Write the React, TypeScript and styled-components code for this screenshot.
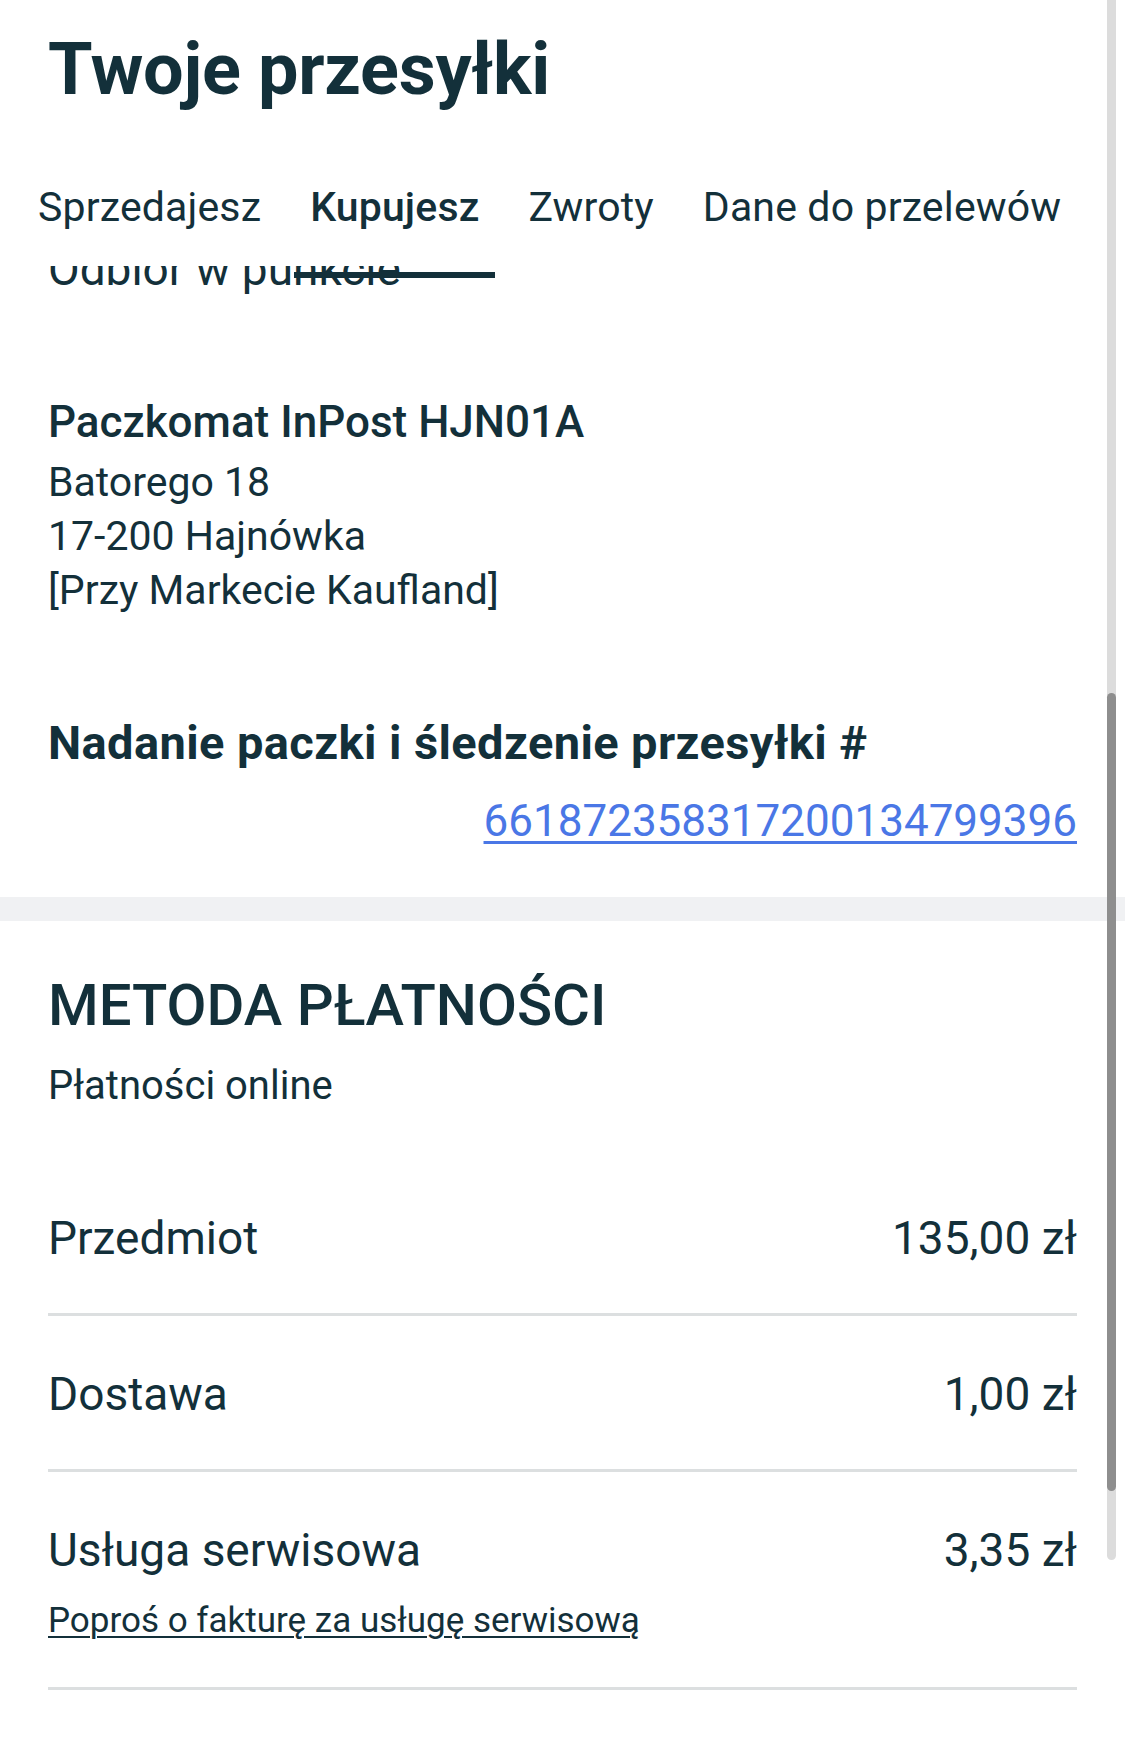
import styled, { createGlobalStyle } from "styled-components";

const ink = "#13303a";
const linkBlue = "#4a77e6";
const divider = "#dcdfe0";

const GlobalStyle = createGlobalStyle`
  html, body {
    margin: 0;
    padding: 0;
    background: #ffffff;
  }
  body {
    font-family: Roboto, "Noto Sans", "Liberation Sans", sans-serif;
    color: ${ink};
  }
  * {
    box-sizing: border-box;
  }
`;

const Page = styled.div`
  position: relative;
  display: flex;
  flex-direction: column;
  width: 100%;
  height: 1738px;
  overflow: hidden;
  background: #ffffff;
`;

const Header = styled.header`
  position: relative;
  z-index: 2;
  flex-shrink: 0;
  background: #ffffff;
  padding-top: 30px;
`;

const Title = styled.h1`
  margin: 0;
  padding: 0 48px;
  font-size: 72px;
  line-height: 80px;
  font-weight: 700;
  letter-spacing: -0.3px;
`;

const TabBar = styled.nav`
  display: flex;
  gap: 17px;
  margin-top: 73px;
  padding-left: 22px;
  white-space: nowrap;
`;

const Tab = styled.div<{ $active?: boolean }>`
  position: relative;
  padding: 0 16px 35px;
  font-size: 41px;
  line-height: 48px;
  letter-spacing: 0.15px;
  font-weight: ${(p) => (p.$active ? 500 : 400)};

  &::after {
    content: "";
    display: ${(p) => (p.$active ? "block" : "none")};
    position: absolute;
    left: 0;
    right: 0;
    top: 89px;
    height: 6px;
    background: ${ink};
  }
`;

const Scroller = styled.main`
  flex: 1;
  overflow: hidden;
`;

const Section = styled.section`
  padding: 0 48px;
`;

const Faded = styled.div`
  margin-top: -24px;
  font-size: 46px;
  line-height: 54px;
`;

const PointName = styled.div`
  margin-top: 104px;
  font-size: 44px;
  line-height: 44px;
  font-weight: 500;
`;

const Address = styled.div`
  margin-top: 11px;
  font-size: 41px;
  line-height: 54px;
`;

const TrackingLabel = styled.div`
  margin-top: 98px;
  font-size: 47px;
  line-height: 56px;
  font-weight: 700;
  letter-spacing: 0.4px;
`;

const TrackingRow = styled.div`
  display: flex;
  justify-content: flex-end;
  margin-top: 24px;
  padding-bottom: 50px;
`;

const TrackingLink = styled.a`
  font-size: 44px;
  line-height: 52px;
  color: ${linkBlue};
  text-decoration: underline;
  text-decoration-thickness: 3px;
  text-underline-offset: 5px;
`;

const Band = styled.div`
  height: 24px;
  background: #f0f1f3;
`;

const SectionTitle = styled.h2`
  margin: 52px 0 0;
  font-size: 58px;
  line-height: 64px;
  font-weight: 500;
`;

const Subtitle = styled.div`
  margin-top: 25px;
  font-size: 40px;
  line-height: 48px;
`;

const PriceList = styled.div`
  margin-top: 50px;
`;

const PriceRow = styled.div`
  display: flex;
  flex-direction: column;
  gap: 21px;
  padding: 50px 0 47px;
  border-bottom: 3px solid ${divider};
`;

const PriceLine = styled.div`
  display: flex;
  justify-content: space-between;
  font-size: 46px;
  line-height: 56px;
`;

const InvoiceLink = styled.a`
  align-self: flex-start;
  margin-bottom: -3px;
  font-size: 35px;
  line-height: 44px;
  color: ${ink};
  text-decoration: underline;
  text-decoration-thickness: 2px;
  text-underline-offset: 4px;
`;

const ScrollTrack = styled.div`
  position: absolute;
  z-index: 3;
  top: 0;
  right: 9px;
  width: 9px;
  height: 1560px;
  border-radius: 0 0 5px 5px;
  background: #dcdcdc;
`;

const ScrollThumb = styled.div`
  position: absolute;
  left: 0;
  right: 0;
  top: 693px;
  height: 798px;
  border-radius: 5px;
  background: #8e8e8e;
`;

const tabs = ["Sprzedajesz", "Kupujesz", "Zwroty", "Dane do przelewów"];

const prices = [
  { label: "Przedmiot", value: "135,00 zł" },
  { label: "Dostawa", value: "1,00 zł" },
  { label: "Usługa serwisowa", value: "3,35 zł", invoice: true },
];

export default function App() {
  return (
    <>
      <GlobalStyle />
      <Page>
        <Header>
          <Title>Twoje przesyłki</Title>
          <TabBar>
            {tabs.map((t) => (
              <Tab key={t} $active={t === "Kupujesz"}>
                {t}
              </Tab>
            ))}
          </TabBar>
        </Header>
        <Scroller>
          <Section>
            <Faded>Odbiór w punkcie</Faded>
            <PointName>Paczkomat InPost HJN01A</PointName>
            <Address>
              Batorego 18
              <br />
              17-200 Hajnówka
              <br />
              [Przy Markecie Kaufland]
            </Address>
            <TrackingLabel>Nadanie paczki i śledzenie przesyłki #</TrackingLabel>
            <TrackingRow>
              <TrackingLink href="#">661872358317200134799396</TrackingLink>
            </TrackingRow>
          </Section>
          <Band />
          <Section>
            <SectionTitle>METODA PŁATNOŚCI</SectionTitle>
            <Subtitle>Płatności online</Subtitle>
            <PriceList>
              {prices.map((p) => (
                <PriceRow key={p.label}>
                  <PriceLine>
                    <span>{p.label}</span>
                    <span>{p.value}</span>
                  </PriceLine>
                  {p.invoice && (
                    <InvoiceLink href="#">
                      Poproś o fakturę za usługę serwisową
                    </InvoiceLink>
                  )}
                </PriceRow>
              ))}
            </PriceList>
          </Section>
        </Scroller>
        <ScrollTrack>
          <ScrollThumb />
        </ScrollTrack>
      </Page>
    </>
  );
}
